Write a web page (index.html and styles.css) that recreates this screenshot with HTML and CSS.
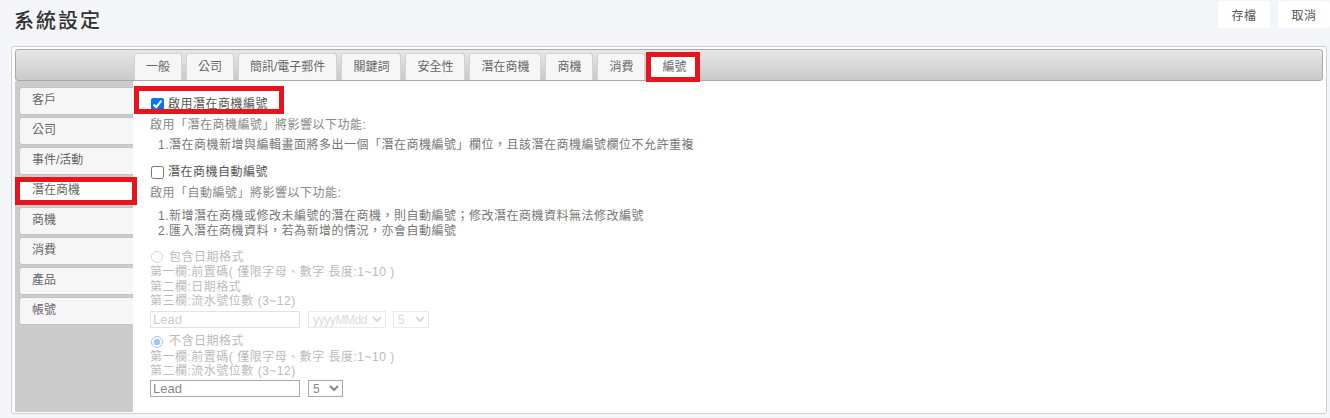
FILE: index.html
```html
<!DOCTYPE html>
<html lang="zh-TW">
<head>
  <meta charset="utf-8">
  <title>系統設定</title>
  <link rel="stylesheet" href="styles.css">
</head>
<body>
  <div class="topbar">
    <h1 class="title">系統設定</h1>
    <div class="actions">
      <button class="btn">存檔</button>
      <button class="btn">取消</button>
    </div>
  </div>

  <div class="panel">
    <div class="tabbar">
      <ul class="tabs">
        <li class="tab">一般</li>
        <li class="tab">公司</li>
        <li class="tab">簡訊/電子郵件</li>
        <li class="tab">關鍵詞</li>
        <li class="tab">安全性</li>
        <li class="tab">潛在商機</li>
        <li class="tab">商機</li>
        <li class="tab">消費</li>
        <li class="tab active marked">編號</li>
      </ul>
    </div>

    <div class="body">
      <ul class="nav">
        <li class="nav-item">客戶</li>
        <li class="nav-item">公司</li>
        <li class="nav-item">事件/活動</li>
        <li class="nav-item active marked">潛在商機</li>
        <li class="nav-item">商機</li>
        <li class="nav-item">消費</li>
        <li class="nav-item">產品</li>
        <li class="nav-item">帳號</li>
      </ul>

      <div class="content">
        <label class="opt first marked"><input type="checkbox" checked>啟用潛在商機編號</label>
        <div class="desc">啟用「潛在商機編號」將影響以下功能:</div>
        <ol class="list">
          <li>1.潛在商機新增與編輯畫面將多出一個「潛在商機編號」欄位，且該潛在商機編號欄位不允許重複</li>
        </ol>

        <label class="opt second"><input type="checkbox">潛在商機自動編號</label>
        <div class="desc">啟用「自動編號」將影響以下功能:</div>
        <ol class="list list2">
          <li>1.新增潛在商機或修改未編號的潛在商機，則自動編號；修改潛在商機資料無法修改編號</li>
          <li>2.匯入潛在商機資料，若為新增的情況，亦會自動編號</li>
        </ol>

        <div class="format">
          <label class="radio"><input type="radio" name="fmt" disabled>包含日期格式</label>
          <div class="hint">第一欄:前置碼( 僅限字母、數字 長度:1~10 )</div>
          <div class="hint">第二欄:日期格式</div>
          <div class="hint">第三欄:流水號位數 (3~12)</div>
          <div class="fields">
            <input class="code" type="text" value="Lead" disabled>
            <select class="sel date" disabled><option>yyyyMMdd</option></select>
            <select class="sel num" disabled><option>5</option></select>
          </div>
        </div>

        <div class="format nodate">
          <label class="radio"><input type="radio" name="fmt" checked disabled>不含日期格式</label>
          <div class="hint">第一欄:前置碼( 僅限字母、數字 長度:1~10 )</div>
          <div class="hint">第二欄:流水號位數 (3~12)</div>
          <div class="fields">
            <input class="code on" type="text" value="Lead">
            <select class="sel num on"><option>5</option></select>
          </div>
        </div>
      </div>
    </div>
  </div>
</body>
</html>
```

FILE: styles.css
```css
body {
  margin: 0;
  background: #f4f5f9;
  font-family: "Liberation Sans", "Noto Sans CJK TC", sans-serif;
  font-size: 12px;
  color: #555;
}
ul, ol {
  list-style: none;
  margin: 0;
  padding: 0;
}

.topbar {
  display: flex;
  justify-content: space-between;
  height: 46px;
  padding-left: 14px;
}
.title {
  margin: 0;
  padding-top: 8px;
  font-size: 20px;
  line-height: 26px;
  letter-spacing: 2px;
  font-weight: 500;
  color: #333;
}
.actions {
  display: flex;
  gap: 8px;
  padding-top: 1px;
}
.btn {
  width: 52px;
  height: 27px;
  border: none;
  border-radius: 3px;
  background: #fff;
  color: #555;
  font-family: inherit;
  font-size: 12px;
  letter-spacing: 0.5px;
  padding: 0;
}

.panel {
  width: 1316px;
  box-sizing: border-box;
  margin-left: 11px;
  border: 1px solid #cfcfcf;
  border-radius: 3px;
  background: #fff;
  padding: 2px 3px 1px 3px;
}
.tabbar {
  height: 32px;
  box-sizing: border-box;
  border: 1px solid #aaa;
  border-radius: 3px;
  background: linear-gradient(#e7e7e7, #c9c9c9);
  display: flex;
  align-items: flex-end;
  padding-left: 118px;
}
.tabs {
  display: flex;
  gap: 4px;
}
.tab {
  position: relative;
  height: 27px;
  box-sizing: border-box;
  padding: 0 11px;
  border: 1px solid #d3d3d3;
  border-bottom: none;
  border-radius: 3px 3px 0 0;
  background: #f6f6f6;
  line-height: 27px;
  color: #666;
}
.tab.active {
  background: #fff;
  height: 28px;
  margin-bottom: -1px;
  padding: 0 12px;
}

.body {
  display: flex;
  min-height: 331px;
}
.nav {
  width: 118px;
  flex: none;
  background: #ccc;
  padding-top: 6px;
}
.nav-item {
  position: relative;
  height: 28px;
  box-sizing: border-box;
  margin: 0 0 2px 4px;
  padding-left: 12px;
  border: 1px solid #c4c4c4;
  border-right: none;
  border-radius: 3px 0 0 3px;
  background: #f6f6f6;
  line-height: 25px;
  color: #666;
}
.nav-item.active {
  background: #fff;
}

/* red annotation frames */
.marked::after {
  content: "";
  position: absolute;
  box-sizing: border-box;
  border: 5px solid #e8141c;
  pointer-events: none;
}
.tab.marked::after {
  left: -4px;
  right: -2px;
  top: -2px;
  bottom: -1px;
}
.nav-item.marked::after {
  left: -5px;
  right: -4px;
  top: -1px;
  bottom: -1px;
}
.opt.marked::after {
  left: -16px;
  top: -10px;
  width: 150px;
  height: 28px;
}

.content {
  flex: 1;
  padding-left: 17px;
  line-height: 15px;
  letter-spacing: 0.5px;
  color: #888;
}
.opt {
  position: relative;
  display: flex;
  align-items: center;
  height: 16px;
  color: #555;
}
.opt input {
  width: 13px;
  height: 13px;
  margin: 0 4px 0 1px;
}
.opt.first {
  margin-top: 15px;
  width: 120px;
}
.opt.second {
  margin-top: 11px;
}
.desc {
  margin-top: 6px;
}
.list {
  margin-top: 5px;
  padding-left: 8px;
  color: #777;
}
.list2 {
  margin-top: 8px;
}

.format {
  margin-top: 10px;
  color: #bbb;
  line-height: 14.5px;
}
.format.nodate {
  margin-top: 6px;
}
.radio {
  display: flex;
  align-items: center;
  height: 16px;
}
.radio input {
  appearance: none;
  width: 12px;
  height: 12px;
  box-sizing: border-box;
  margin: 0 6px 0 1px;
  border: 1px solid #d4d4d4;
  border-radius: 50%;
  background: #fff;
}
.radio input:checked {
  border-color: #9fc6f3;
  background: radial-gradient(circle, #9fc6f3 0 3px, #fff 3.6px);
}
.fields {
  display: flex;
  gap: 8px;
  margin-top: 2px;
}
.nodate .fields {
  margin-top: 1px;
}
.code {
  width: 150px;
  height: 17px;
  box-sizing: border-box;
  margin: 0;
  padding: 0 2px;
  border: 1px solid #e2e2e2;
  border-radius: 0;
  background: #fff;
  font-family: "Liberation Sans", sans-serif;
  font-size: 13px;
  letter-spacing: 0;
  color: #ccc;
}
.code.on {
  border-color: #a9a9a9;
  color: #888;
}
.sel {
  height: 17px;
  box-sizing: border-box;
  margin: 0;
  padding: 0;
  border: 1px solid #e2e2e2;
  border-radius: 0;
  background: #fff;
  font-family: "Liberation Sans", sans-serif;
  font-size: 12px;
  letter-spacing: -0.4px;
  color: #ccc;
}
.sel.date {
  width: 78px;
}
.sel.num {
  width: 36px;
  margin-left: -1px;
}
.sel.on {
  border-color: #a9a9a9;
  color: #888;
  margin-left: 0;
  width: 35px;
}
```
